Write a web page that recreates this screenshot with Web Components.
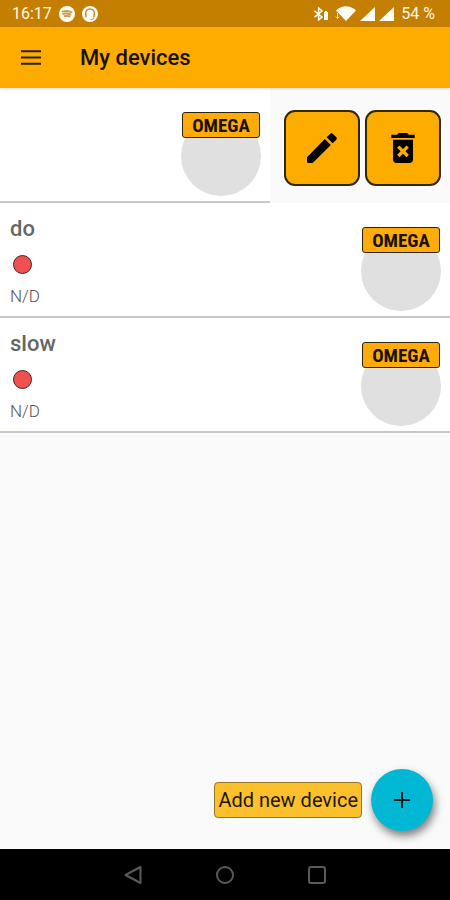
<!DOCTYPE html>
<html lang="en">
<head>
<meta charset="utf-8">
<meta name="viewport" content="width=device-width, initial-scale=1">
<title>My devices</title>
<style>
  html,body{margin:0;height:100%}
  body{font-family:Roboto,"Liberation Sans",sans-serif;background:#fafafa}
</style>
</head>
<body>
<device-app>
  <status-bar slot="top" time="16:17" battery="54 %"></status-bar>
  <app-header slot="top">My devices</app-header>
  <device-row swiped></device-row>
  <device-row name="do" value="N/D"></device-row>
  <device-row name="slow" value="N/D"></device-row>
  <add-device slot="action">Add new device</add-device>
  <nav-bar slot="bottom"></nav-bar>
</device-app>

<script>
// small base: one open shadow root per element, filled from html()
class BaseEl extends HTMLElement {
  constructor(){ super(); this.attachShadow({mode:'open'}); }
  connectedCallback(){ this.shadowRoot.innerHTML=this.html(); }
}

class DeviceApp extends BaseEl {
  html(){ return `
    <style>
      :host{display:flex;flex-direction:column;min-height:100vh}
      header{position:relative;z-index:1}
      main{flex:1;display:flex;flex-direction:column}
      .action{margin-top:auto;padding:16px 17px 18px}
    </style>
    <header><slot name="top"></slot></header>
    <main>
      <slot></slot>
      <div class="action"><slot name="action"></slot></div>
    </main>
    <slot name="bottom"></slot>`; }
}
customElements.define('device-app', DeviceApp);

class StatusBar extends BaseEl {
  html(){ return `
    <style>
      :host{display:flex;align-items:center;justify-content:space-between;height:27px;padding:0 15px 0 12px;
        background:#c47f00;color:#fff8ea;font-size:16px;line-height:20px}
      .group{display:flex;align-items:center}
      .left{gap:7px}
      .right{gap:4px}
      .battery{margin-left:3px}
      svg{display:block;fill:#fffdf5}
    </style>
    <div class="group left">
      <span>${this.getAttribute('time')}</span>
      <svg width="16" height="16" viewBox="0 0 16 16"><circle cx="8" cy="8" r="8"/>
        <path d="M3.5 5.6q5-1.5 9 .8M4 8q4-1.2 7.5.6M5.5 10.2q3-.6 5 .4" fill="none" stroke="#c79a4c" stroke-width="1.8" stroke-linecap="round"/></svg>
      <svg width="16" height="16" viewBox="0 0 16 16"><circle cx="8" cy="8" r="8"/>
        <path d="M3.6 9V7.5a4.4 4.4 0 0 1 8.8 0V9M4 8.3v3M12 8.3v3" fill="none" stroke="#c08a30" stroke-width="1.5"/>
        <path d="M12 12q-1 1.6-3.4 1.6" fill="none" stroke="#c08a30"/></svg>
    </div>
    <div class="group right">
      <svg width="16" height="14" viewBox="0 0 16 14">
        <path d="M1.5 3.8 9 10 5.6 13V1L9 4 1.5 10.2" fill="none" stroke="#fffdf5" stroke-width="1.5"/>
        <path d="M11 5h1V4h2v1h1v8h-4z"/></svg>
      <svg width="23" height="15" viewBox="0 0 23 15"><path d="M3 4.5Q13-3.8 23 4.5L13 15z"/>
        <path d="M4.5 7v5.5M2.6 10.6l1.9 1.9 1.9-1.9" fill="none" stroke="#f0d9ad"/></svg>
      <svg width="15" height="14" viewBox="0 0 15 14"><path d="M15 0v14H0z"/></svg>
      <svg width="15" height="14" viewBox="0 0 15 14"><path d="M15 0v14H0z"/></svg>
      <span class="battery">${this.getAttribute('battery')}</span>
    </div>`; }
}
customElements.define('status-bar', StatusBar);

class AppHeader extends BaseEl {
  html(){ return `
    <style>
      :host{display:flex;align-items:center;gap:32px;height:61px;padding:0 14px;background:#ffac00;
        box-shadow:0 1px 2px rgba(0,0,0,.16)}
      button{display:grid;place-items:center;width:34px;height:40px;padding:0;border:0;background:none;cursor:pointer}
      h1{margin:0;font-size:22px;line-height:28px;font-weight:500;color:#161100}
    </style>
    <button aria-label="Open menu">
      <svg width="20" height="15" viewBox="0 0 20 15"><path d="M0 1.2h20M0 7.5h20M0 13.8h20" stroke="#2a2000" stroke-width="2"/></svg>
    </button>
    <h1><slot></slot></h1>`; }
}
customElements.define('app-header', AppHeader);

class DeviceLogo extends BaseEl {
  html(){ return `
    <style>
      :host{display:grid;justify-items:center;align-items:start;width:80px}
      .disc,.plate{grid-area:1/1}
      .disc{width:80px;height:80px;margin-top:4px;border-radius:50%;background:#e0e0e0}
      .plate{box-sizing:border-box;width:78px;height:26px;border:1px solid #2c230c;border-radius:3px;background:#ffac0a;
        color:#1a1300;text-align:center;
        font:bold 19px/26px "Liberation Sans Narrow","Roboto Condensed","Open Sans Condensed",Roboto,sans-serif}
    </style>
    <div class="disc"></div>
    <div class="plate">OMEGA</div>`; }
}
customElements.define('device-logo', DeviceLogo);

class DeviceRow extends BaseEl {
  html(){
    const swiped=this.hasAttribute('swiped');
    const name=this.getAttribute('name'); const value=this.getAttribute('value');
    return `
    <style>
      :host{display:flex;height:115px}
      .card{box-sizing:border-box;flex:1;display:flex;justify-content:space-between;padding:14px 9px 0 10px;
        background:#fff;border-bottom:2px solid #c8c8c8}
      h2{margin:0;font-size:22px;line-height:24px;font-weight:500;color:#666}
      .dot{box-sizing:border-box;width:19px;height:19px;margin:14px 3px 12px;border:1px solid #4a2020;border-radius:50%;background:#f05050}
      p{margin:0;font-size:17px;line-height:20px;font-weight:300;color:#555}
      device-logo{margin:10px 0 0 auto}
      .actions{display:flex;gap:5px;padding:22px 9px 0 14px}
      .actions button{display:grid;place-items:center;width:76px;height:76px;padding:0;border:2px solid #33270a;
        border-radius:11px;background:#ffac00;cursor:pointer}
    </style>
    <div class="card">
      ${name?`<div><h2>${name}</h2><div class="dot" role="img" aria-label="Offline"></div><p>${value}</p></div>`:''}
      <device-logo></device-logo>
    </div>
    ${swiped?`
      <div class="actions">
        <button aria-label="Edit device">
          <svg width="40" height="40" viewBox="0 0 24 24"><path d="M3 17.6V20.2q0 .8.8.8h2.6L17.3 10.2l-3.6-3.6zM20.6 7a1 1 0 0 0 0-1.4l-2.2-2.2a1 1 0 0 0-1.4 0l-2.2 2.1 3.6 3.6z"/></svg>
        </button>
        <button aria-label="Delete device">
          <svg width="40" height="40" viewBox="0 0 24 24"><path d="M6 19c0 1.1.9 2 2 2h8c1.1 0 2-.9 2-2V7H6zm2.46-7.12 1.41-1.41L12 12.59l2.12-2.12 1.41 1.41L13.41 14l2.12 2.12-1.41 1.41L12 15.41l-2.12 2.12-1.41-1.41L10.59 14zM15.5 4l-1-1h-5l-1 1H5v2h14V4z"/></svg>
        </button>
      </div>`:''}`;
  }
}
customElements.define('device-row', DeviceRow);

class AddDevice extends BaseEl {
  html(){ return `
    <style>
      :host{display:flex;align-items:center;justify-content:flex-end;gap:9px}
      label{padding:4px 3px;border:1px solid #94752c;border-radius:4px;background:#fcc02c;color:#1c1708;
        font-size:20px;line-height:26px;cursor:pointer}
      button{display:grid;place-items:center;width:62px;height:62px;padding:0;border:0;border-radius:50%;
        background:#00b8d4;box-shadow:2px 5px 8px rgba(0,0,0,.5);cursor:pointer}
    </style>
    <label for="add"><slot></slot></label>
    <button id="add">
      <svg width="16" height="16" viewBox="0 0 16 16"><path d="M8 0v16M0 8h16" stroke="#00191d" stroke-width="2"/></svg>
    </button>`; }
}
customElements.define('add-device', AddDevice);

class NavBar extends BaseEl {
  html(){ return `
    <style>
      :host{display:flex;align-items:center;justify-content:center;gap:56px;height:51px;background:#000}
      button{display:grid;place-items:center;width:36px;height:36px;padding:0;border:0;background:none;cursor:pointer}
      svg{fill:none;stroke:#5a5a5a;stroke-width:2;stroke-linejoin:round}
    </style>
    <button aria-label="Back"><svg width="18" height="18" viewBox="0 0 18 18"><path d="M16.5 1v16L1.5 9z"/></svg></button>
    <button aria-label="Home"><svg width="18" height="18" viewBox="0 0 18 18"><circle cx="9" cy="9" r="8"/></svg></button>
    <button aria-label="Recent apps"><svg width="18" height="18" viewBox="0 0 18 18"><rect x="1" y="1" width="16" height="16" rx="2"/></svg></button>`; }
}
customElements.define('nav-bar', NavBar);
</script>
</body>
</html>
